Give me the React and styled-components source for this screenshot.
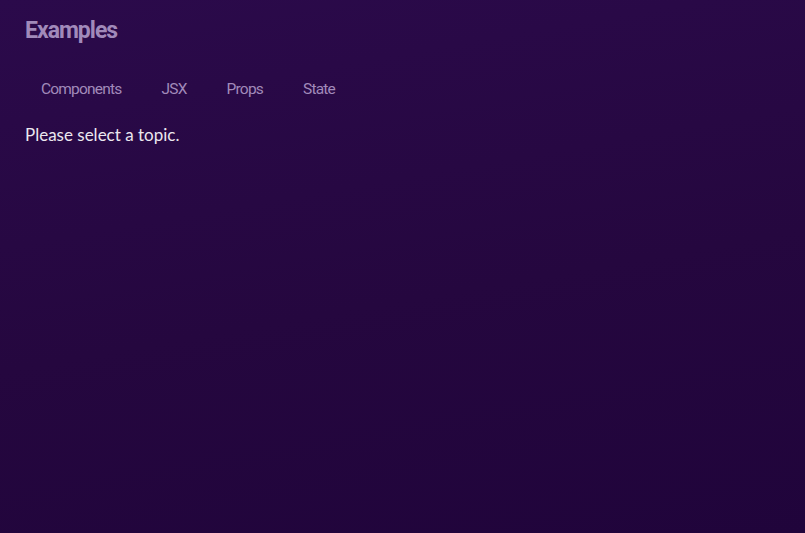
import React, {useState} from 'react'
import styled, {createGlobalStyle, css} from 'styled-components';

const GlobalStyle = createGlobalStyle`
    html, body {
        margin: 0;
        padding: 0;
        height: 100%;
    }
    body {
        font-family: Lato, "Open Sans", sans-serif;
        background: linear-gradient(170deg, #2b0a4b 0%, #25073f 55%, #20043b 100%);
        color: #ebe7ef;
        min-height: 533px;
    }
`

const Section = styled.section`
    padding: 17px 25px;
`

const Heading = styled.h2`
    margin: 0 0 30px;
    font-family: Roboto, sans-serif;
    font-size: 23px;
    font-weight: 700;
    letter-spacing: -1px;
    color: #a18aba;
`

const Menu = styled.menu`
    display: flex;
    gap: 8px;
    margin: 0 0 20px;
    padding: 0;
`

const TabButton = styled.button`
    font-family: Roboto, sans-serif;
    font-size: 15.5px;
    letter-spacing: -0.8px;
    background: transparent;
    border: none;
    border-radius: 6px;
    padding: 6px 16px;
    color: #a18aba;
    cursor: pointer;

    ${({active}) => active && css`
        background-color: #40175f;
        color: #f0e6fa;
    `}
`

const Message = styled.p`
    margin: 0;
    font-size: 17px;
    color: #ebe7ef;
`

const TOPICS = ['Components', 'JSX', 'Props', 'State'];

export default function App() {
    const [selected, setSelected] = useState(null);

    return <>
        <GlobalStyle/>
        <Section>
            <Heading>Examples</Heading>
            <Menu>
                {TOPICS.map(t =>
                    <TabButton key={t} active={selected === t} onClick={() => setSelected(t)}>{t}</TabButton>
                )}
            </Menu>
            {!selected && <Message>Please select a topic.</Message>}
        </Section>
    </>
}
